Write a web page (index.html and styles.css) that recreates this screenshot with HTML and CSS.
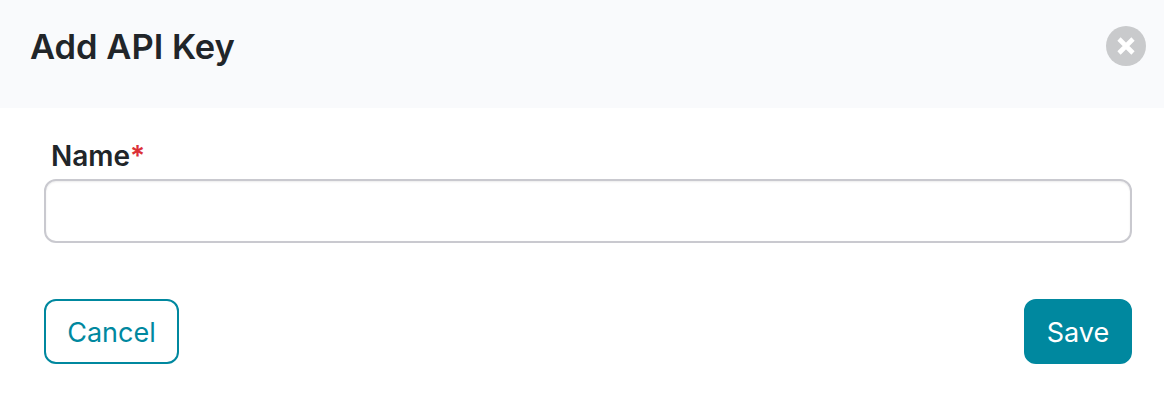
FILE: index.html
```html
<!DOCTYPE html>
<html lang="en">

<head>
    <meta charset="UTF-8">
    <title>Add API Key</title>
    <link rel="stylesheet" href="styles.css">
</head>

<body>
    <div class="modal-header">
        <h1>Add API Key</h1>
        <button class="close-btn" aria-label="Close">
            <svg width="20" height="20" viewBox="0 0 20 20">
                <path d="M3 3L17 17M17 3L3 17" stroke="#fff" stroke-width="4.6" fill="none" />
            </svg>
        </button>
    </div>

    <form class="modal-body">
        <label class="field-label" for="name">Name<span class="required">*</span></label>
        <input type="text" id="name" class="field-input">
        <div class="actions">
            <button type="button" class="btn btn-outline">Cancel</button>
            <button type="button" class="btn btn-primary">Save</button>
        </div>
    </form>
</body>

</html>
```

FILE: styles.css
```css
body {
    margin: 0;
    background-color: #fff;
    font-family: Inter, "Liberation Sans", sans-serif;
    color: #212529;
}

.modal-header {
    height: 108px;
    box-sizing: border-box;
    padding: 0 18px 16px 30px;
    display: flex;
    align-items: center;
    justify-content: space-between;
    background-color: #f9fafc;
}

.modal-header h1 {
    margin: 2px 0 0;
    font-size: 34.5px;
    font-weight: 600;
    line-height: 40px;
}

.close-btn {
    width: 40px;
    height: 40px;
    padding: 0;
    border: none;
    border-radius: 50%;
    background-color: #c9cacc;
    display: flex;
    align-items: center;
    justify-content: center;
}

.modal-body {
    padding: 30px 32px 0 44px;
}

.field-label {
    display: block;
    margin-left: 7px;
    font-size: 28px;
    font-weight: 600;
    line-height: 36px;
}

.required {
    color: #dc3038;
}

.field-input {
    display: block;
    width: 100%;
    height: 64px;
    margin-top: 5px;
    box-sizing: border-box;
    border: 2px solid #c9c9cf;
    border-radius: 12px;
    background-color: #fff;
    box-shadow: inset 0 1px 2px rgba(0, 0, 0, 0.08);
}

.actions {
    display: flex;
    justify-content: space-between;
    margin-top: 56px;
}

.btn {
    height: 65px;
    padding: 2px 0 0;
    box-sizing: border-box;
    border-radius: 12px;
    font-family: inherit;
    font-size: 27px;
    font-weight: 400;
}

.btn-outline {
    width: 135px;
    border: 2px solid #00889f;
    background-color: #fff;
    color: #00889f;
}

.btn-primary {
    width: 108px;
    border: 2px solid #00889f;
    background-color: #00889f;
    color: #fff;
}
```
